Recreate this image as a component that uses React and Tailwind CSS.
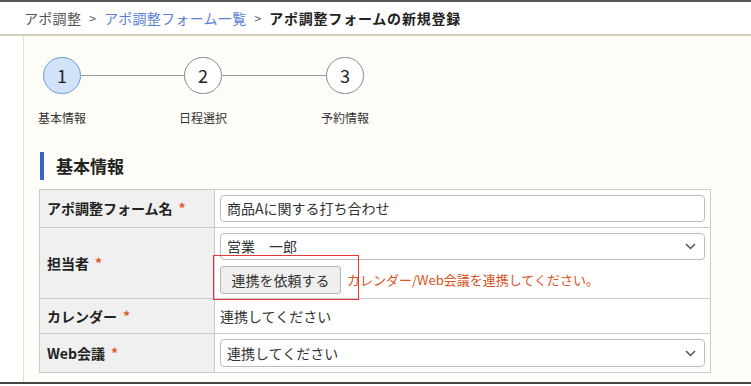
import React from "react";

const font = { fontFamily: '"Noto Sans CJK JP", "Noto Sans", sans-serif' };

function Chevron() {
  return (
    <svg width="11" height="7" viewBox="0 0 11 7" className="shrink-0">
      <polyline points="1,1 5.5,5.5 10,1" fill="none" stroke="#555" strokeWidth="1.5" />
    </svg>
  );
}

function Req() {
  return <span className="ml-[6px] text-[#e05a2b]">*</span>;
}

const steps = ["基本情報", "日程選択", "予約情報"];

export default function App() {
  return (
    <div className="w-[751px] h-[386px] flex flex-col bg-white overflow-hidden" style={font}>
      {/* header / breadcrumb */}
      <div className="h-[36px] shrink-0 border-t-2 border-t-[#555] border-b-2 border-b-[#d3d1ba] flex items-center pl-[24px] gap-[8px] text-[14px] text-[#555]">
        <span className="tracking-[0.3px]">アポ調整</span>
        <span className="text-[12px]">&gt;</span>
        <span className="tracking-[0.3px] text-[#5b82d6]">アポ調整フォーム一覧</span>
        <span className="text-[12px]">&gt;</span>
        <span className="tracking-[0.8px] font-bold text-[#222]">アポ調整フォームの新規登録</span>
      </div>

      <div className="flex-1 flex min-h-0">
        <div className="w-[23px] shrink-0 bg-white" />
        <div className="flex-1 bg-[#fffdf7] border-l border-[#e3e0cf] pt-[21px]">
          {/* stepper */}
          <div className="ml-[19px] grid grid-cols-[38px_103px_38px_104px_38px] items-center">
            {[0, 1, 2].map((i) => (
              <React.Fragment key={i}>
                <div
                  className={
                    i === 0
                      ? "w-[38px] h-[37px] rounded-full border-[1.5px] border-[#6d9ae0] bg-[#d2e2f8] flex items-center justify-center text-[18px] text-[#222]"
                      : "w-[38px] h-[37px] rounded-full border-[1.5px] border-[#8a8a8a] bg-white flex items-center justify-center text-[18px] text-[#222]"
                  }
                >
                  {i + 1}
                </div>
                {i < 2 && <div className="h-[1.5px] bg-[#9a9a9a]" />}
              </React.Fragment>
            ))}
            {steps.map((s, i) => (
              <React.Fragment key={s}>
                <div className="mt-[16px] flex justify-center">
                  <span className="whitespace-nowrap text-[12px] leading-[16px] text-[#333]">{s}</span>
                </div>
                {i < 2 && <div />}
              </React.Fragment>
            ))}
          </div>

          {/* section heading */}
          <div className="mt-[26px] ml-[16px] flex items-center h-[28px]">
            <div className="w-[4px] h-[28px] bg-[#3a62c9]" />
            <span className="ml-[12px] text-[17px] font-bold text-[#222]">基本情報</span>
          </div>

          {/* form table */}
          <div className="mt-[9px] ml-[15px] w-[672px] border border-[#cbcbcb] text-[14px] text-[#333]">
            <div className="flex h-[38px] border-b border-[#cbcbcb]">
              <div className="w-[175px] shrink-0 bg-[#f0f0f0] border-r border-[#cbcbcb] flex items-center pl-[7px] font-bold text-[#222]">
                アポ調整フォーム名<Req />
              </div>
              <div className="flex-1 bg-white flex items-center px-[5px]">
                <div className="w-full h-[27px] border border-[#bdbdbd] rounded-[4px] flex items-center pl-[6px]">
                  商品Aに関する打ち合わせ
                </div>
              </div>
            </div>

            <div className="flex h-[71px] border-b border-[#cbcbcb]">
              <div className="w-[175px] shrink-0 bg-[#f0f0f0] border-r border-[#cbcbcb] flex items-center pl-[7px] font-bold text-[#222]">
                担当者<Req />
              </div>
              <div className="relative flex-1 bg-white flex flex-col px-[5px] pt-[5px]">
                <div className="w-full h-[27px] border border-[#bdbdbd] rounded-[4px] flex items-center justify-between pl-[6px] pr-[8px]">
                  <span>営業　一郎</span>
                  <Chevron />
                </div>
                <div className="mt-[6px] flex items-center">
                  <div className="w-[121px] h-[28px] bg-[#efefef] border border-[#b5b5b5] rounded-[3px] flex items-center justify-center">
                    連携を依頼する
                  </div>
                  <span className="ml-[6px] text-[13px] text-[#d9531e]">カレンダー/Web会議を連携してください。</span>
                </div>
                <div className="absolute left-[-2px] top-[27px] w-[146px] h-[45px] border border-[#e23a3a]" />
              </div>
            </div>

            <div className="flex h-[35px] border-b border-[#cbcbcb]">
              <div className="w-[175px] shrink-0 bg-[#f0f0f0] border-r border-[#cbcbcb] flex items-center pl-[7px] font-bold text-[#222]">
                カレンダー<Req />
              </div>
              <div className="flex-1 bg-white flex items-center pl-[5px]">連携してください</div>
            </div>

            <div className="flex h-[38px]">
              <div className="w-[175px] shrink-0 bg-[#f0f0f0] border-r border-[#cbcbcb] flex items-center pl-[7px] font-bold text-[#222]">
                Web会議<Req />
              </div>
              <div className="flex-1 bg-white flex items-center px-[5px]">
                <div className="w-full h-[28px] border border-[#bdbdbd] rounded-[4px] flex items-center justify-between pl-[6px] pr-[8px]">
                  <span>連携してください</span>
                  <Chevron />
                </div>
              </div>
            </div>
          </div>
        </div>
      </div>
      <div className="h-[2px] shrink-0 bg-[#444]" />
      <div className="h-[2px] shrink-0 bg-white" />
    </div>
  );
}
